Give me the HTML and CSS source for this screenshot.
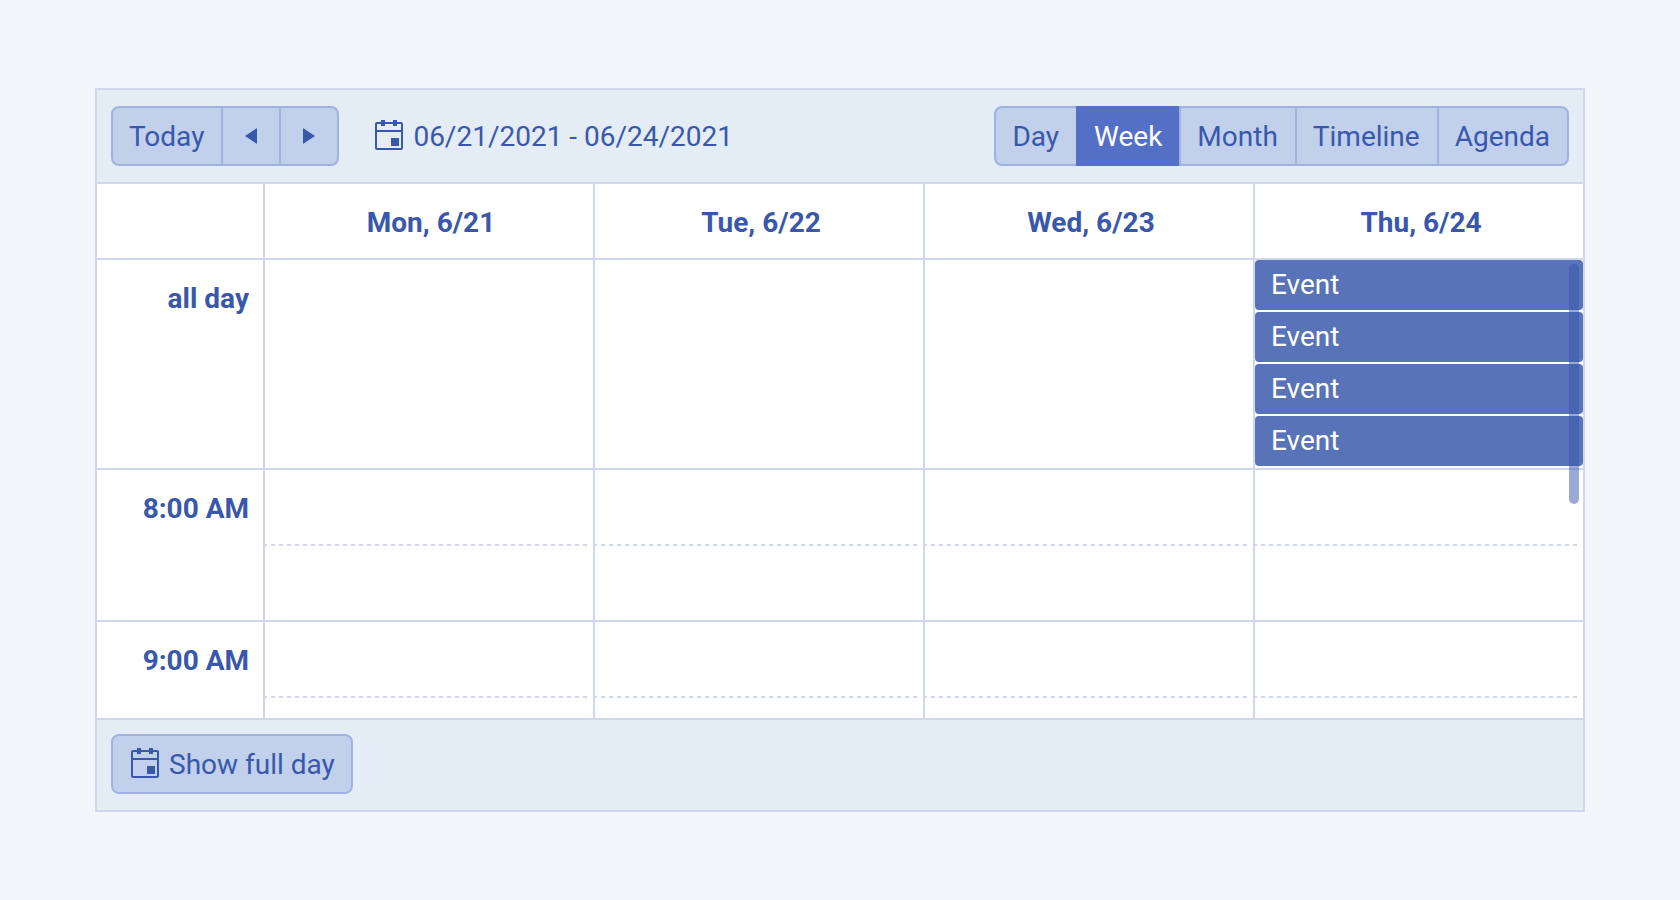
FILE: index.html
```html
<!DOCTYPE html>
<html lang="en">
<head>
<meta charset="utf-8">
<title>Scheduler</title>
<link rel="stylesheet" href="styles.css">
</head>
<body>
<svg class="sprite" aria-hidden="true">
  <symbol id="calendar" viewBox="0 0 28 30">
    <rect x="1" y="3" width="26" height="26" rx="1" fill="none" stroke="currentColor" stroke-width="2"/>
    <path d="M6 0h4v6h-4zM18 0h4v6h-4zM1 10h26v2h-26zM16 18h8v8h-8z" fill="currentColor"/>
  </symbol>
</svg>
<main class="scheduler">
  <header class="toolbar">
    <div class="group">
      <button class="btn" type="button">Today</button>
      <button class="btn btn-arrow" type="button" aria-label="Previous"><svg class="arrow" viewBox="0 0 12 16" aria-hidden="true"><path d="M12 0v16L0 8z" fill="currentColor"/></svg></button>
      <button class="btn btn-arrow" type="button" aria-label="Next"><svg class="arrow" viewBox="0 0 12 16" aria-hidden="true"><path d="M0 0v16l12-8z" fill="currentColor"/></svg></button>
    </div>
    <button class="range" type="button"><svg class="icon" aria-hidden="true"><use href="#calendar"/></svg>06/21/2021 - 06/24/2021</button>
    <div class="group views">
      <button class="btn" type="button">Day</button>
      <button class="btn active" type="button" aria-pressed="true">Week</button>
      <button class="btn" type="button">Month</button>
      <button class="btn" type="button">Timeline</button>
      <button class="btn" type="button">Agenda</button>
    </div>
  </header>
  <div class="body">
    <table class="week">
      <colgroup><col class="times"><col><col><col><col></colgroup>
      <thead>
        <tr><td></td><th scope="col">Mon, 6/21</th><th scope="col">Tue, 6/22</th><th scope="col">Wed, 6/23</th><th scope="col">Thu, 6/24</th></tr>
      </thead>
      <tbody>
        <tr class="all-day">
          <th scope="row">all day</th><td></td><td></td><td></td>
          <td>
            <ul class="events">
              <li class="event">Event</li>
              <li class="event">Event</li>
              <li class="event">Event</li>
              <li class="event">Event</li>
            </ul>
          </td>
        </tr>
        <tr class="hour"><th scope="row">8:00 AM</th><td></td><td></td><td></td><td></td></tr>
        <tr class="hour"><th scope="row">9:00 AM</th><td></td><td></td><td></td><td></td></tr>
      </tbody>
    </table>
    <div class="scroll-thumb"></div>
  </div>
  <footer class="footer">
    <button class="btn btn-full" type="button"><svg class="icon" aria-hidden="true"><use href="#calendar"/></svg>Show full day</button>
  </footer>
</main>
</body>
</html>
```
FILE: styles.css
```css
:root {
  --line: #d0d7eb;
  --text: #3958ac;
  --bar: #e4ecf6;
  --button: #c1d0eb;
  --button-line: #a1b2de;
}

* { box-sizing: border-box; }

body {
  display: flex;
  height: 100vh;
  margin: 0;
  padding: 88px 95px;
  background: #f2f6fb;
  color: var(--text);
  font: 28px/36px Roboto, sans-serif;
}

.sprite {
  position: absolute;
  width: 0;
  height: 0;
}

.scheduler {
  display: flex;
  flex: 1;
  flex-direction: column;
  min-width: 0;
  border: 2px solid var(--line);
  background: #fff;
}

.toolbar,
.footer {
  display: flex;
  align-items: center;
  padding: 16px 14px;
  background: var(--bar);
}

.toolbar { border-bottom: 2px solid var(--line); }

.footer {
  padding: 14px 14px 16px;
  border-top: 2px solid var(--line);
}

button {
  display: flex;
  align-items: center;
  margin: 0;
  color: inherit;
  font: inherit;
  white-space: nowrap;
  cursor: pointer;
}

.btn {
  padding: 11px 17px 9px 16px;
  border: 2px solid var(--button-line);
  border-radius: 8px;
  background: var(--button);
}

.btn-full {
  padding-right: 16px;
  padding-left: 18px;
}

.group { display: flex; }
.group .btn { border-radius: 0; }
.group .btn + .btn { margin-left: -2px; }
.group .btn:first-child { border-radius: 8px 0 0 8px; }
.group .btn:last-child { border-radius: 0 8px 8px 0; }

.group .active {
  border-color: #5470c6;
  background: #5470c6;
  color: #fff;
}

.group .active + .btn { z-index: 1; }

.btn-arrow {
  justify-content: center;
  width: 60px;
  padding: 10px 16px;
}

.arrow {
  width: 12px;
  height: 16px;
}

.icon {
  width: 28px;
  height: 30px;
  margin: 0 10px 4px 0;
}

.range {
  margin-left: 36px;
  padding: 2px 0 0;
  border: 0;
  background: none;
}

.views { margin-left: auto; }

.body {
  position: relative;
  flex: 1;
  min-height: 0;
  overflow: hidden;
}

/* The last column's right border runs under the frame's own border. */
.week {
  width: calc(100% + 2px);
  border-spacing: 0;
  table-layout: fixed;
}

.times { width: 168px; }

.week th,
.week td {
  padding: 0;
  border-right: 2px solid var(--line);
  border-bottom: 2px solid var(--line);
  vertical-align: top;
}

.week thead th {
  height: 76px;
  padding: 21px 0 17px 4px;
}

.week tbody th {
  padding: 21px 14px 0 0;
  text-align: right;
}

.all-day { height: 210px; }
.hour { height: 152px; }

.week .hour td {
  background: repeating-linear-gradient(90deg, var(--line) 0 2px, transparent 2px 6px, var(--line) 6px 8px) 0 74px / calc(100% - 4px) 2px no-repeat;
}

.events {
  display: grid;
  gap: 2px;
  margin: 0;
  padding: 0;
  list-style: none;
}

.event {
  padding: 7px 16px;
  border-radius: 4px;
  background: #5973b8;
  color: #fff;
}

.scroll-thumb {
  position: absolute;
  top: 80px;
  right: 4px;
  width: 10px;
  height: 240px;
  border-radius: 5px;
  background: #3554ac;
  opacity: 0.5;
}
```
